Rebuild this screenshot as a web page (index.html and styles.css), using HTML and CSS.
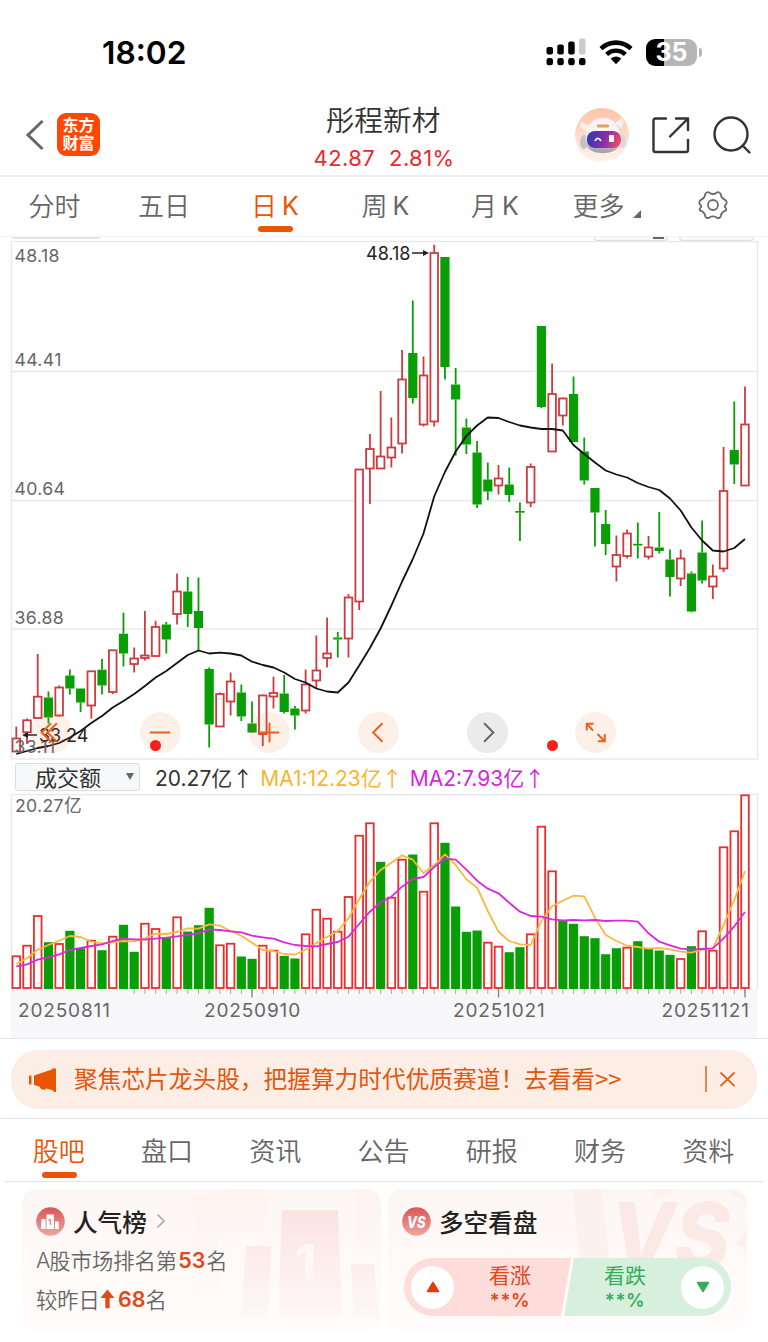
FILE: index.html
```html
<!DOCTYPE html>
<html lang="zh-CN">
  <head>
    <meta charset="UTF-8" />
    <title>彤程新材 42.87</title>
    <link rel="stylesheet" href="styles.css">
  </head>
  <body>
    <div class="status-bar">
      <span class="time">18:02</span>
      <div class="status-icons">
        <svg class="signal" width="40" height="28" viewBox="0 0 40 28">
          <rect x="0.5" y="9" width="6.5" height="7.5" rx="2" />
          <rect x="11.3" y="6.5" width="6.5" height="10" rx="2" />
          <rect x="22.2" y="3.5" width="6.5" height="13" rx="2" />
          <rect x="33" y="0.5" width="6.5" height="16" rx="2" fill="#cbcbcb" />
          <rect x="0.5" y="20" width="6.5" height="7.3" rx="2.4" />
          <rect x="11.3" y="20" width="6.5" height="7.3" rx="2.4" />
          <rect x="22.2" y="20" width="6.5" height="7.3" rx="2.4" />
          <rect x="33" y="20" width="6.5" height="7.3" rx="2.4" />
        </svg>
        <svg class="wifi" width="34" height="25" viewBox="0 0 34 25">
          <path d="M2 8.6C10.5.6 23.5.6 32 8.6" fill="none" stroke="#000" stroke-width="4.6" />
          <path d="M7.6 14.4C13 9.4 21 9.4 26.4 14.4" fill="none" stroke="#000" stroke-width="4.4" />
          <path d="M11.7 18.7C14.8 15.9 19.2 15.9 22.3 18.7L17 24.3Z" />
        </svg>
        <div class="battery"><span>35</span></div>
      </div>
    </div>

    <header class="title-bar">
      <div class="title-left">
        <svg width="20" height="32" viewBox="0 0 20 32">
          <path d="M17.5 2L3 16L17.5 30" fill="none" stroke="#666" stroke-width="3" />
        </svg>
        <div class="logo">东方<br>财富</div>
      </div>
      <div class="stock">
        <h1>彤程新材</h1>
        <p><span>42.87</span><span>2.81%</span></p>
      </div>
      <div class="title-right">
        <svg width="56" height="56" viewBox="0 0 56 56">
          <defs>
            <linearGradient id="halo" x1="0" y1="0" x2="0" y2="1">
              <stop offset="0" stop-color="#fdc3a6" />
              <stop offset="1" stop-color="#fff4ee" />
            </linearGradient>
            <linearGradient id="helmet" x1="0" y1="0" x2="0" y2="1">
              <stop offset="0.4" stop-color="#f6f3f4" />
              <stop offset="1" stop-color="#a09ba8" />
            </linearGradient>
            <linearGradient id="visor" x1="0" y1="0" x2="1" y2="0.2">
              <stop offset="0" stop-color="#2b3aa6" />
              <stop offset="0.6" stop-color="#8a2bb0" />
              <stop offset="1" stop-color="#e4486c" />
            </linearGradient>
          </defs>
          <circle cx="28" cy="28" r="27" fill="url(#halo)" />
          <path d="M9 23C6 20 6 17 7 14C9 17 12 18 15 18L14 24ZM47 21C50 18 50 14 48 10C46 13 44 14 41 16Z" fill="#f5efef" />
          <ellipse cx="10" cy="35" rx="4" ry="7" fill="#c6c0c8" />
          <ellipse cx="48" cy="34" rx="4" ry="7" fill="#dcd6db" />
          <path d="M29 11C39 11 45 18 46.5 29C48 41 40 46 29 46C18 46 10 42 11.5 30C13 18 19 11 29 11Z" fill="url(#helmet)" />
          <rect x="23" y="17.5" width="12" height="3" rx="1" fill="#e3a069" />
          <rect x="13" y="24" width="34" height="17" rx="8" fill="url(#visor)" />
          <path d="M21 34C22.5 30.5 25 30.5 27 34" fill="none" stroke="#dff" stroke-width="1.8" />
          <rect x="35" y="28" width="5" height="7" rx="1" fill="#fff" />
        </svg>
        <svg width="38" height="38" viewBox="0 0 38 38" fill="none" stroke="#333" stroke-width="2.4" stroke-linecap="round" stroke-linejoin="round">
          <path d="M14 2.5H3.5Q1.500 2.5 1.500 4.5V34Q1.500 36 3.500 36H34Q36 36 36 34V24" />
          <path d="M24 2.5H36V14M36 2.5L18 20.5" />
        </svg>
        <svg width="40" height="40" viewBox="0 0 40 40" fill="none" stroke="#333" stroke-width="2.4" stroke-linecap="round">
          <circle cx="19" cy="19" r="16.5" />
          <path d="M30.5 30.5L37.5 37.5" />
        </svg>
      </div>
    </header>

    <nav class="period-tabs">
      <a>分时</a>
      <a>五日</a>
      <a class="active">日<i>K</i></a>
      <a>周<i>K</i></a>
      <a>月<i>K</i></a>
      <a class="more">更多<svg width="8" height="8" viewBox="0 0 8 8"><path d="M8 0V8H0Z" fill="#666" /></svg></a>
      <a>
        <svg class="gear" width="30" height="28" viewBox="0 0 30 28" fill="none" stroke="#6b6b6b" stroke-width="1.8" stroke-linejoin="round">
          <path d="M7.5 2.5Q9 .8 11 1.3Q13 3.2 15 3Q17 3.2 19 1.3Q21 .8 22.5 2.5Q23 5.6 24.5 7Q26 8.5 28 9.5Q29.2 11.5 28 13.5Q26.5 14.5 26.7 16Q28.8 17.5 28 19.5Q25.5 20 24.5 21.5Q23 23 22.5 25.8Q21 27.5 19 26.8Q17 25.2 15 25.4Q13 25.2 11 26.8Q9 27.5 7.5 25.8Q7 23 5.5 21.5Q4.5 20 2 19.5Q1 17.5 3.3 16Q3.5 14.5 2 13.5Q.8 11.5 2 9.5Q4 8.5 5.5 7Q7 5.6 7.5 2.5Z" />
          <circle cx="15" cy="14" r="5" />
        </svg>
      </a>
    </nav>

    <section class="price-chart">
      <div class="peek peek-left"></div>
      <div class="peek peek-mid"></div>
      <div class="peek peek-right"></div>
      <svg id="priceChart" width="768" height="523" viewBox="0 237 768 523"></svg>
      <div class="chart-tools">
        <button><svg viewBox="0 0 42 42"><path d="M20.5 11.5L11 21L20.5 30.5M26.5 11.5L17 21L26.5 30.5" /></svg></button>
        <button><svg viewBox="0 0 42 42"><path d="M10 21H31" /></svg></button>
        <button><svg viewBox="0 0 42 42"><path d="M10.5 21H31M21 11V31" /></svg></button>
        <button><svg viewBox="0 0 42 42"><path d="M25 11.5L15.5 21L25 30.5" /></svg></button>
        <button class="disabled"><svg viewBox="0 0 42 42"><path d="M17.5 11.5L27 21L17.5 30.5" /></svg></button>
        <button><svg viewBox="0 0 42 42"><path d="M12 19V12H19M12 12L18.5 19M23.500 30H30.5V22.5M30.5 30L23 22.5" /></svg></button>
      </div>
      <span class="dot dot-minus"></span>
      <span class="dot dot-expand"></span>
    </section>

    <div class="indicator">
      <div class="select">成交额<i></i></div>
      <span class="value">20.27亿<i>↑</i></span>
      <span class="value ma1">MA1:12.23亿<i>↑</i></span>
      <span class="value ma2">MA2:7.93亿<i>↑</i></span>
    </div>

    <svg id="volumeChart" class="volume-chart" width="768" height="244" viewBox="0 794 768 244"></svg>

    <div class="notice-wrap">
      <div class="notice">
        <svg width="28" height="24" viewBox="0 0 28 24" fill="#e95504">
          <rect x="0" y="7.5" width="2.5" height="9" />
          <path d="M5 7.5L23 1.500V.5H27V24H24.5V22.5L17 20.5L16 22L12 21L10.5 18.5L5 17Z" />
        </svg>
        <p>聚焦芯片龙头股，把握算力时代优质赛道！去看看&gt;&gt;</p>
        <svg class="close" width="32" height="28" viewBox="0 0 32 28" fill="none" stroke="#e0641f" stroke-width="1.8">
          <path d="M1 0V26" stroke-width="1.5" />
          <path d="M15.5 6.5L29.5 20M29.5 6.5L15.5 20" />
        </svg>
      </div>
    </div>

    <nav class="info-tabs">
      <a class="active">股吧</a>
      <a>盘口</a>
      <a>资讯</a>
      <a>公告</a>
      <a>研报</a>
      <a>财务</a>
      <a>资料</a>
    </nav>

    <main class="cards">
      <section class="card">
        <svg class="watermark" width="359" height="142" viewBox="0 0 359 142">
          <defs>
            <linearGradient id="fade" x1="0" y1="0" x2="0" y2="1">
              <stop offset="0" stop-color="#fbe3e2" />
              <stop offset="1" stop-color="#fef8f6" />
            </linearGradient>
            <linearGradient id="faint" x1="0" y1="0" x2="0" y2="1">
              <stop offset="0" stop-color="#fdf3f0" />
              <stop offset="1" stop-color="#fefaf9" />
            </linearGradient>
          </defs>
          <path d="M171 6L205 4V0H243V45H196V115H171ZM334 0H359V62H334Z" fill="url(#faint)" />
          <path d="M224 57H249L246 129H219ZM260 21H316L320 129H256ZM329 75H352L357 129H332Z" fill="url(#fade)" />
          <text class="wm-one" x="273" y="90">1</text>
        </svg>
        <h2>
          <svg width="29" height="29" viewBox="0 0 29 29">
            <defs>
              <linearGradient id="badge" x1="0" y1="0" x2="0" y2="1">
                <stop offset="0" stop-color="#db5555" />
                <stop offset="1" stop-color="#f0a6a1" />
              </linearGradient>
            </defs>
            <circle cx="14.5" cy="14.5" r="14.3" fill="url(#badge)" />
            <path d="M5.5 12H9.5V22H5ZM10.5 7.5H18V22H10.5ZM19 14.5H22.500L23 22H19Z" fill="#fff" />
            <text class="badge-one" x="12.3" y="17.5">1</text>
          </svg>
          <span>人气榜</span>
          <svg class="arrow" width="10" height="16" viewBox="0 0 10 16"><path d="M1.5 1.5L8 8L1.5 14.5" fill="none" stroke="#aaa" stroke-width="1.6" /></svg>
        </h2>
        <p class="rank"><em>A</em>股市场排名第<b>53</b>名</p>
        <p class="rank">较昨日<svg width="15" height="20" viewBox="0 0 15 20"><path d="M7.5 .5L14.5 9H9.7V18.5Q7.5 20.5 5.3 18.5V9H.5Z" fill="#e2481b" /></svg><b class="delta">68</b>名</p>
      </section>

      <section class="card">
        <svg class="watermark" width="359" height="142" viewBox="0 0 359 142">
          <path d="M184 0H214L222 75H192ZM262 0H288L270 10ZM340 0Q356 2 359 14L346 6ZM359 40V62L348 55Z" fill="#fdf1ee" />
          <text class="wm-vs" x="222" y="80" textLength="120" lengthAdjust="spacingAndGlyphs">VS</text>
        </svg>
        <h2>
          <svg width="29" height="29" viewBox="0 0 29 29">
            <circle cx="14.5" cy="14.5" r="14.3" fill="url(#badge)" />
            <text class="badge-vs" x="5" y="20.5" textLength="18.5" lengthAdjust="spacingAndGlyphs">VS</text>
          </svg>
          <span>多空看盘</span>
        </h2>
        <div class="vote">
          <div class="vote-half up">
            <span class="knob"><svg width="14" height="12" viewBox="0 0 14 12"><path d="M7 1.5L12.5 10.5H1.5Z" fill="#e03c10" stroke="#e03c10" stroke-width="1.5" stroke-linejoin="round" /></svg></span>
            <div class="vote-text">看涨<b>**%</b></div>
          </div>
          <div class="vote-half down">
            <div class="vote-text">看跌<b>**%</b></div>
            <span class="knob"><svg width="14" height="12" viewBox="0 0 14 12"><path d="M7 10.5L12.5 1.5H1.5Z" fill="#36ad5c" stroke="#36ad5c" stroke-width="1.5" stroke-linejoin="round" /></svg></span>
          </div>
        </div>
      </section>
    </main>

    <script src="chart.js"></script>
  </body>
</html>
```
FILE: styles.css
```css
* {
  box-sizing: border-box;
}

body {
  margin: 0;
  width: 768px;
  height: 1342px;
  overflow: hidden;
  background: #fff;
  color: #333;
  font-family: Inter, "Noto Sans CJK SC", sans-serif;
}

h1,
h2,
p {
  margin: 0;
  font-weight: 400;
}

i,
em {
  font-style: normal;
}

svg {
  display: block;
  flex-shrink: 0;
}

/* status bar */
.status-bar {
  display: flex;
  justify-content: space-between;
  align-items: center;
  height: 94px;
  padding: 10px 66px 0 102px;
}

.time {
  font-size: 31.7px;
  font-weight: 600;
  color: #000;
}

.status-icons {
  display: flex;
  align-items: center;
  gap: 13px;
}

.battery {
  position: relative;
  width: 51px;
  height: 27px;
  margin-right: 5px;
  border-radius: 9px;
  background: linear-gradient(90deg, #000 36%, #b5b5b5 36%);
  color: #fff;
  font-size: 25px;
  font-weight: 700;
  line-height: 27px;
  text-align: center;
}

.battery::after {
  content: "";
  position: absolute;
  right: -5px;
  top: 9px;
  width: 3px;
  height: 9px;
  border-radius: 0 3px 3px 0;
  background: #b5b5b5;
}

/* title bar */
.title-bar {
  display: grid;
  grid-template-columns: 1fr 200px 1fr;
  height: 83px;
  border-bottom: 2px solid #efefef;
}

.title-left {
  display: flex;
  align-items: center;
  gap: 12px;
  padding-left: 25px;
}

.logo {
  width: 43px;
  height: 43px;
  padding-top: 4px;
  border-radius: 9px;
  background: #ff4706;
  color: #fff;
  font-size: 16px;
  font-weight: 700;
  line-height: 17.5px;
  text-align: center;
}

.stock {
  text-align: center;
}

.stock h1 {
  margin-top: 7px;
  margin-left: -2px;
  font-size: 28.7px;
  font-weight: 350;
  line-height: 40px;
}

.stock p {
  display: flex;
  justify-content: center;
  gap: 14px;
  color: #e8292d;
  font-size: 22px;
  letter-spacing: 0.4px;
  line-height: 34px;
}

.title-right {
  display: flex;
  align-items: center;
  justify-content: flex-end;
  gap: 22px;
  padding-right: 16px;
}

/* K line period tabs */
.period-tabs {
  display: grid;
  grid-template-columns: 109px 110px 112px 109px 110px 113px 100px;
  height: 60px;
  border-bottom: 1px solid #f2f2f2;
}

.period-tabs a {
  position: relative;
  display: flex;
  align-items: center;
  justify-content: center;
  gap: 5px;
  padding-bottom: 5px;
  color: #666;
  font-size: 26px;
  font-weight: 350;
}

.period-tabs i {
  padding-top: 3px;
  font-size: 25px;
  font-weight: 400;
}

.period-tabs .more {
  align-items: center;
  gap: 8px;
}

.more svg {
  margin-top: 20px;
}

.gear {
  margin-top: 2px;
}

.period-tabs .active,
.info-tabs .active {
  color: #ea5504;
}

.period-tabs .active::after,
.info-tabs .active::after {
  content: "";
  position: absolute;
  bottom: 4px;
  width: 35px;
  height: 6px;
  border-radius: 3px;
  background: #ea5504;
}

/* price chart */
.price-chart {
  position: relative;
  height: 523px;
}

.peek {
  position: absolute;
  top: 0;
  height: 4px;
  border: 1px solid #dedee4;
  border-top: 0;
  border-radius: 0 0 4px 4px;
  background: #f8f8fa;
}

.peek-left {
  left: 12px;
  width: 88px;
  height: 2px;
  border: 0;
  background: #e4e4ec;
}

.peek-mid {
  left: 593px;
  width: 75px;
}

.peek-mid::after {
  content: "";
  position: absolute;
  left: 59px;
  top: 0;
  width: 11px;
  height: 2px;
  background: #666;
}

.peek-right {
  left: 679px;
  width: 75px;
}

.axis {
  fill: #666;
  font-size: 17.7px;
  letter-spacing: 0.3px;
}

.mark {
  fill: #222;
  font-size: 18px;
}

.date {
  fill: #666;
  font-size: 19px;
  letter-spacing: 0.85px;
}

.chart-tools {
  position: absolute;
  left: 31px;
  top: 475px;
  display: flex;
  gap: 67.9px;
}

.chart-tools button {
  width: 41px;
  height: 41px;
  padding: 0;
  border: 0;
  border-radius: 50%;
  background: rgba(240, 120, 50, 0.11);
}

.chart-tools svg {
  width: 41px;
  height: 41px;
  fill: none;
  stroke: #ea5f1a;
  stroke-width: 2;
}

.chart-tools .disabled {
  background: #ebebeb;
}

.chart-tools .disabled svg {
  stroke: #666;
}

.dot {
  position: absolute;
  top: 503px;
  width: 11px;
  height: 11px;
  border-radius: 50%;
  background: #f32020;
}

.dot-minus {
  left: 150px;
}

.dot-expand {
  left: 547px;
}

/* volume */
.indicator {
  display: flex;
  align-items: center;
  height: 34px;
  padding-left: 15px;
}

.select {
  display: flex;
  align-items: center;
  justify-content: space-between;
  width: 125px;
  height: 28px;
  margin-right: 15px;
  padding: 0 5px 2px 19px;
  border: 1px solid #dcdce2;
  border-radius: 3px;
  background: #f7f8fa;
  font-size: 22px;
}

.select i {
  border: 4px solid transparent;
  border-top: 7px solid #666;
  border-bottom: 0;
}

.value {
  height: 30px;
  margin-right: 7px;
  font-size: 21px;
  line-height: 30px;
  white-space: nowrap;
}

.value i {
  font-family: "Noto Sans CJK SC", sans-serif;
  font-size: 21px;
}

.ma1 {
  color: #f8b62f;
}

.ma2 {
  color: #d91fe0;
}

/* notice */
.notice-wrap {
  height: 81px;
  padding: 11px 11px 0;
  border-top: 1px solid #e8e8ea;
  border-bottom: 1px solid #e8e8e8;
}

.notice {
  display: flex;
  align-items: center;
  height: 59px;
  padding: 0 20px 0 18px;
  border-radius: 27px;
  background: #fceee5;
}

.notice p {
  margin-left: 17px;
  padding-bottom: 3px;
  color: #e2570f;
  font-family: "Noto Sans CJK SC", sans-serif;
  font-size: 23.7px;
}

.close {
  margin-left: auto;
}

/* info tabs */
.info-tabs {
  display: grid;
  grid-template-columns: repeat(7, 1fr);
  height: 63px;
  margin: 0 5px;
  border-bottom: 1px solid #e6e6e6;
}

.info-tabs a {
  position: relative;
  display: flex;
  align-items: center;
  justify-content: center;
  padding: 0 1px 2px 0;
  color: #666;
  font-size: 26px;
  font-weight: 350;
}

.info-tabs .active::after {
  left: 37px;
  bottom: 3px;
}

/* cards */
.cards {
  display: grid;
  grid-template-columns: 359px 359px;
  gap: 7px;
  padding: 7px 22px;
}

.card {
  position: relative;
  height: 142px;
  padding: 17px 16px 0 14px;
  border-radius: 14px;
  overflow: hidden;
  background: linear-gradient(#fdf7f4, #fffcfb);
}

.watermark {
  position: absolute;
  left: 0;
  top: 0;
}

.wm-one {
  fill: #fef7f5;
  font-size: 48px;
  font-weight: 800;
}

.wm-vs {
  fill: #fbe9e6;
  font-size: 92px;
  font-style: italic;
  font-weight: 800;
}

.card h2 {
  position: relative;
  display: flex;
  align-items: center;
  gap: 8px;
  height: 30px;
  color: #222;
  font-size: 24.6px;
  font-weight: 500;
}

.card h2 span {
  padding-bottom: 1px;
}

.card .arrow {
  margin-left: 1px;
}

.badge-one {
  fill: #e07070;
  font-size: 7px;
  font-weight: 700;
}

.badge-vs {
  fill: #fff;
  font-size: 16px;
  font-style: italic;
  font-weight: 800;
}

.rank {
  position: relative;
  display: flex;
  align-items: center;
  height: 39px;
  margin-top: 4px;
  color: #666;
  font-size: 21.3px;
  font-weight: 350;
}

.rank + .rank {
  margin-top: 0;
}

.rank em {
  margin-right: -1px;
}

.rank b {
  margin: 0 1px;
  color: #e2481b;
  font-size: 21.5px;
  font-weight: 600;
}

.rank .delta {
  margin-left: 3px;
  margin-right: 0;
}

.vote {
  position: relative;
  display: flex;
  margin: 22px 0 0 2px;
  width: 327px;
  height: 58px;
}

.vote-half {
  display: flex;
  align-items: center;
}

.up {
  width: 167px;
  padding-left: 7px;
  border-radius: 29px 0 0 29px;
  background: #fddcda;
  clip-path: polygon(0 0, 100% 0, 157px 100%, 0 100%);
  color: #e2481b;
}

.down {
  width: 167px;
  margin-left: -7px;
  padding-right: 7px;
  justify-content: flex-end;
  border-radius: 0 29px 29px 0;
  background: #d7efdd;
  clip-path: polygon(10px 0, 100% 0, 100% 100%, 0 100%);
  color: #36ad5c;
}

.knob {
  display: flex;
  align-items: center;
  justify-content: center;
  width: 43px;
  height: 43px;
  border-radius: 50%;
  background: #fff;
}

.vote-text {
  font-size: 21px;
  line-height: 25px;
  text-align: center;
}

.up .vote-text {
  margin-left: 35px;
}

.down .vote-text {
  margin-right: 35px;
}

.vote-text b {
  display: block;
  font-size: 18.5px;
  font-weight: 600;
  letter-spacing: 0.6px;
  line-height: 24px;
}
```
FILE: chart.js
```javascript
const RED = "#cf3a3f";
const VOL_RED = "#ef2b2b";
const GREEN = "#0a9e06";
const STEP = 10.716;
const x = (i) => 16.3 + i * STEP;

// [up / down, high, body top, body bottom, low]
const candles = [
  ["u", 726.5, 738.5, 751.5, 752], ["u", 718.5, 720.3, 732.3, 744], ["u", 654, 696.7, 718, 718],
  ["d", 691.5, 697.5, 717.5, 723.5], ["u", 685.5, 687.5, 715.5, 716.5], ["d", 669.5, 675.5, 688.5, 694.5],
  ["d", 688.5, 688.5, 702.5, 712], ["u", 671, 671.3, 705.5, 718.5], ["d", 659, 669.7, 685.5, 694.5],
  ["u", 650, 650.3, 692, 694], ["d", 612.7, 633.7, 653.5, 666.5], ["u", 647.5, 658.5, 664, 672.5],
  ["u", 611, 655.5, 658, 660.5], ["u", 620.7, 627, 656, 656], ["d", 622, 624.5, 639.5, 653.5],
  ["u", 573.5, 591.5, 614, 624.5], ["d", 577, 591.5, 614, 627], ["d", 577.5, 611, 628, 651.5],
  ["d", 667.5, 669, 724.5, 747.5], ["u", 692.5, 694, 726.5, 726.5], ["u", 672.5, 681.5, 701.5, 715.5],
  ["d", 684.5, 692.5, 716.5, 721], ["d", 701.5, 723.5, 732.5, 733], ["u", 694.5, 695.5, 734, 746],
  ["u", 676.7, 693, 696.5, 708.5], ["d", 675, 693.5, 712, 713.5], ["d", 706, 708.5, 715.5, 729.5],
  ["u", 669.5, 684.5, 710.5, 713.5], ["u", 635.5, 670.5, 680.5, 688.5], ["u", 617.5, 653.5, 658, 667.5],
  ["d", 632, 637.5, 639.5, 657.5], ["u", 594, 597.5, 638.5, 657.5], ["u", 469.5, 469.5, 601.5, 610],
  ["u", 434, 449, 468.5, 504], ["u", 391, 456.5, 468.5, 468.5], ["u", 417.5, 447.5, 457.5, 467.5],
  ["u", 350, 379.5, 443.5, 453.5], ["d", 300.5, 353, 398, 403.5], ["u", 356.5, 375.5, 424.5, 426.5],
  ["u", 244.7, 253, 421.5, 426.5], ["d", 257, 257, 367, 379.5], ["d", 368, 384.5, 399.5, 455.5],
  ["d", 418.5, 427.5, 444.5, 454], ["d", 441, 452.5, 504.5, 508], ["d", 462.5, 479.5, 491.5, 500],
  ["u", 465, 478.5, 485.5, 494.5], ["d", 467.5, 484.5, 495, 502], ["d", 502.5, 511, 512.7, 541],
  ["u", 463.5, 467, 502.5, 507], ["d", 326, 326, 407, 408], ["u", 363.5, 394, 451.5, 451.5],
  ["u", 397.5, 398.5, 415.5, 425.5], ["d", 376.5, 394, 442, 442], ["d", 437.5, 451.5, 480.5, 484.5],
  ["d", 488, 488, 512.5, 546.5], ["d", 510, 524, 544, 555], ["u", 535.5, 555, 566.5, 581.5],
  ["u", 529.5, 533.5, 556, 558.5], ["d", 522.5, 543.8, 545.5, 558.5], ["u", 536, 547.5, 556.5, 559.5],
  ["d", 512, 547.5, 551, 553.5], ["d", 549.5, 559.5, 577, 596.5], ["u", 549.5, 558.5, 578.5, 586],
  ["d", 571.5, 573.5, 611.5, 612.5], ["d", 520.5, 552.5, 580.5, 583.5], ["u", 564.5, 576.5, 586.5, 599],
  ["u", 447, 491, 568.5, 572], ["d", 401.5, 450, 464.5, 484], ["u", 386.5, 424.5, 485.5, 485.5],
];

const priceMa = [
  754, 751, 748, 746, 743, 737.5, 731, 723, 716, 707.5, 701, 694, 686, 677.5, 671, 663, 655, 650.5,
  653.5, 652.7, 653.5, 655.5, 661.7, 665, 667.5, 672.5, 679, 682.5, 688.5, 691.5, 692.5, 682.5, 665.5,
  648, 628.5, 605.5, 581.5, 559, 533.5, 496.5, 472, 451.5, 436, 425.5, 417.5, 418, 422, 425.5, 427.5,
  429, 429, 430.5, 445, 454, 462.5, 470.5, 474.5, 477.5, 483, 487, 490, 498.5, 510.5, 527.5, 540.5,
  550.5, 551.5, 548, 539,
];

// ten bars per group
const volumeSide = [
  "uuududdudu",
  "dduududddu",
  "udduudduuu",
  "uuuuduuduu",
  "dddduudduu",
  "uddddddudd",
  "dduduuuuu",
].join("");

const volumes = [
  956.3, 945.7, 916, 942.7, 944, 931.3, 948.7, 940.7, 950.7, 936.7, 925.3, 952.3, 923.7, 929, 938.3,
  917.3, 932, 925.7, 908.3, 945.3, 943.7, 957, 959.3, 945.7, 950.7, 956.3, 959, 934.3, 909.7, 918.7,
  931.7, 897, 835.7, 823.3, 862.3, 897.7, 859.7, 855, 891.7, 823.3, 843.3, 907, 932.3, 931, 942.7,
  946.7, 952.7, 947.7, 934.3, 826.7, 871.3, 921, 924.3, 936.7, 938.7, 954.7, 948.7, 947.7, 941.7,
  948.7, 951, 955.3, 959, 946.7, 931.3, 950.7, 847.3, 831.3, 795.3,
];

const volMa1 = [
  964, 958.3, 949.7, 945, 940.7, 936, 937, 941.7, 943.3, 942.3, 941, 941.3, 938.3, 933.7, 934, 932,
  928.3, 928.7, 924.3, 925.7, 930.7, 935.7, 942.7, 950, 951, 954, 954.7, 949.7, 943.3, 936.7, 931,
  918.3, 899.3, 881.7, 870, 862.7, 855.3, 859.7, 873, 865.3, 854.3, 865, 879.3, 887.7, 911, 931.7, 941,
  944.3, 945, 921, 906.3, 900.7, 895.7, 896.3, 917.7, 935, 941, 945.7, 947, 948.7, 948, 949.3, 951.7,
  952.7, 949.3, 948.3, 925, 900, 871.3,
];

const volMa2 = [
  966.3, 964.3, 959.7, 957.3, 954.3, 950, 948, 946, 944.3, 941, 938.7, 939.3, 939.7, 938.7, 937.7,
  936.3, 935, 933.3, 929.3, 930, 931.3, 932.3, 935.7, 937.3, 938.7, 942.3, 945, 946, 946.3, 944, 942,
  936.7, 924, 911.7, 902.3, 896.7, 886.7, 879, 877, 867, 858.7, 859.7, 869.7, 880.7, 888.7, 893.3,
  902.7, 911.7, 916, 916.7, 919.3, 920.3, 920, 920.3, 920, 921, 920.7, 920.7, 921.7, 933.3, 941.7,
  945.3, 948.7, 949.7, 949, 948.3, 938.3, 926.3, 912,
];

function line(points, color) {
  const pts = points.map((y, i) => `${x(i).toFixed(1)},${y}`).join(" ");
  return `<polyline points="${pts}" fill="none" stroke="${color}" stroke-width="1.8" stroke-linejoin="round" />`;
}

function seg(x1, y1, x2, y2, color, width) {
  return `<line x1="${x1}" y1="${y1}" x2="${x2}" y2="${y2}" stroke="${color}" stroke-width="${width}" />`;
}

function box(cx, top, bottom, up, color) {
  if (up) {
    return `<rect x="${cx - 3.8}" y="${top}" width="7.6" height="${bottom - top}" fill="#fff" stroke="${color}" stroke-width="1.8" />`;
  }
  return `<rect x="${cx - 4.6}" y="${top}" width="9.2" height="${bottom - top}" fill="${color}" />`;
}

function text(cls, tx, ty, value) {
  return `<text class="${cls}" x="${tx}" y="${ty}">${value}</text>`;
}

function drawPrice() {
  let out = `<rect x="11.5" y="241.5" width="746" height="517.5" fill="none" stroke="#e6e6ec" stroke-width="1.3" />`;
  [371.5, 500.5, 629].forEach((y) => (out += seg(11, y, 757, y, "#e8e8ef", 1.4)));
  candles.forEach(([side, high, top, bottom, low], i) => {
    const color = side === "u" ? RED : GREEN;
    out += seg(x(i), high, x(i), top, color, 1.8);
    out += seg(x(i), bottom, x(i), low, color, 1.8);
    out += box(x(i), top, bottom, side === "u", color);
  });
  out += line(priceMa, "#111");
  out += text("axis", 14.5, 261.5, "48.18");
  out += text("axis", 14.5, 365.5, "44.41");
  out += text("axis", 14.5, 495, "40.64");
  out += text("axis", 14.5, 624, "36.88");
  out += text("axis", 14.5, 753, "33.11");
  out += text("mark", 366, 259.5, "48.18");
  out += seg(412, 253, 424, 253, "#222", 1.5) + `<path d="M423 250L429 253L423 256Z" fill="#222" />`;
  out += text("mark", 39, 742, "33.24");
  out += seg(27, 735, 37, 735, "#222", 1.5) + `<path d="M28 732L22 735L28 738Z" fill="#222" />`;
  document.getElementById("priceChart").innerHTML = out;
}

function drawVolume() {
  let out = `<rect x="11" y="989" width="746" height="49" fill="#f7f7fa" />`;
  out += `<path d="M11.5 989V794.5H757.5V989" fill="none" stroke="#e6e6ec" stroke-width="1.3" />`;
  out += text("axis", 15, 811.5, "20.27亿");
  volumes.forEach((top, i) => {
    const up = volumeSide[i] === "u";
    out += box(x(i), up ? top : top - 0.5, up ? 988 : 989, up, up ? VOL_RED : GREEN);
    if (i > 10) out += seg(x(i), 989, x(i), 994, "#aaa", 1);
  });
  [22, 45, 68].forEach((i) => (out += seg(x(i), 989, x(i), 997.5, "#888", 1.4)));
  out += line(volMa1, "#fab83c");
  out += line(volMa2, "#d928de");
  out += text("date", 18, 1016.5, "20250811");
  out += text("date", 204, 1016.5, "20250910");
  out += text("date", 453, 1016.5, "20251021");
  out += text("date", 661.5, 1016.5, "20251121");
  document.getElementById("volumeChart").innerHTML = out;
}

drawPrice();
drawVolume();
```
